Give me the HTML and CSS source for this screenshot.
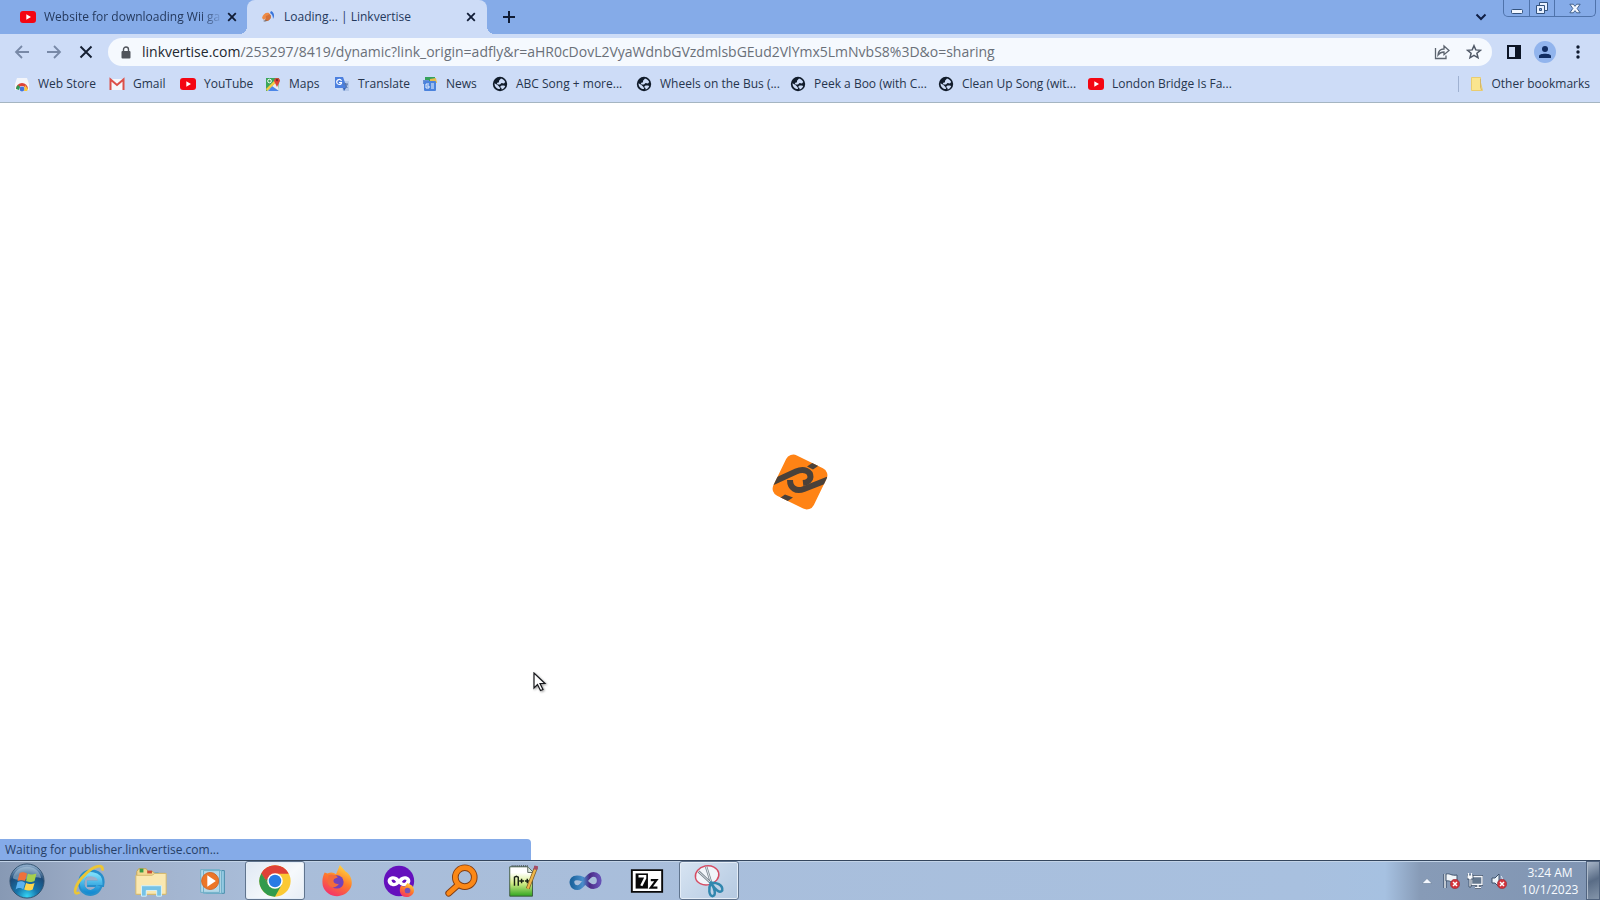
FILE: index.html
```html
<!DOCTYPE html>
<html lang="en">
<head>
<meta charset="utf-8">
<title>Loading... | Linkvertise</title>
<link rel="stylesheet" href="styles.css">
</head>
<body>
<svg class="defs" aria-hidden="true">
  <defs>
    <symbol id="youtube" viewBox="0 0 16 16"><rect y="2" width="16" height="12" rx="3" fill="#f40612"/><path d="M6.3 5.2v5.6L11 8z" fill="#fff"/></symbol>
    <symbol id="globe" viewBox="0 0 16 16"><circle cx="8" cy="8" r="7.2" fill="#111c2b"/><path d="M2.500 7.200c1 1 2.500 1 3.500 2.300S8 11 8 13c-3 0-5.500-2-5.500-5.800zM9 2.500c1.700.3 3.500 1.600 4.200 3.500L12 7.500 9.500 7 8 8.500H5.500L4.800 7 7 6.200V4.800zM9.500 9.500h2.700l1 .7c-.7 1.600-1.800 2.600-3.500 3.200l-.3-1.500L8 11z" fill="#cddcf7"/></symbol>
    <symbol id="cross" viewBox="0 0 10 10"><path d="M1.200 1.200l7.600 7.600M8.800 1.200L1.200 8.800" stroke="#101c35" stroke-width="1.800"/></symbol>
    <symbol id="badge" viewBox="0 0 10 10"><circle cx="5" cy="5" r="4.700" fill="#d3323b" stroke="#8e343e" stroke-width=".6"/><path d="M3 3l4 4M7 3L3 7" stroke="#fff" stroke-width="1.500"/></symbol>
    <linearGradient id="fire" x1=".8" y1="0" x2=".3" y2="1"><stop stop-color="#ffe043"/><stop offset=".5" stop-color="#ff7b29"/><stop offset="1" stop-color="#f3306d"/></linearGradient>
    <radialGradient id="orb" cx=".5" cy=".95" r=".9"><stop stop-color="#35d5f5"/><stop offset=".35" stop-color="#1676ac"/><stop offset=".75" stop-color="#1c4a78"/><stop offset="1" stop-color="#8aa9c8"/></radialGradient>
    <linearGradient id="ie" x2="0" y2="1"><stop stop-color="#7bddfa"/><stop offset="1" stop-color="#168cd2"/></linearGradient>
    <linearGradient id="loop"><stop stop-color="#1d659f"/><stop offset=".4" stop-color="#4a8fcc"/><stop offset=".65" stop-color="#4b2a86"/><stop offset="1" stop-color="#6650b5"/></linearGradient>
    <linearGradient id="note" x2="0" y2="1"><stop offset=".2" stop-color="#fff"/><stop offset=".55" stop-color="#d6ee8a"/><stop offset="1" stop-color="#30a51f"/></linearGradient>
  </defs>
</svg>

<header class="browser">
  <div class="tabstrip">
    <div class="tab">
      <svg class="icon16"><use href="#youtube"/></svg>
      <span class="tab-title fade">Website for downloading Wii ga</span>
      <button class="tab-close" aria-label="Close tab"><svg width="10" height="10"><use href="#cross"/></svg></button>
    </div>
    <div class="tab active">
      <svg class="icon16" viewBox="0 0 16 16"><path d="M2 9c1-4 4-6 7-5l1 2-3 1-3 4z" fill="#ee8b45"/><path d="M3 12c2 1 5 0 7-2l1-4-3 2-2 3z" fill="#685d5c"/><path d="M6 7l4-2 1 4-3 3-3-1z" fill="#d67238"/><path d="M11 2c3 1 4 5 2 8 0-3-1-5-3-6z" fill="#3975dc"/></svg>
      <span class="tab-title">Loading... | Linkvertise</span>
      <button class="tab-close" aria-label="Close tab"><svg width="10" height="10"><use href="#cross"/></svg></button>
    </div>
    <button class="new-tab" aria-label="New tab"><svg width="14" height="14" viewBox="0 0 14 14"><path d="M7 1v12M1 7h12" stroke="#101c35" stroke-width="2"/></svg></button>
    <button class="tab-search" aria-label="Search tabs"><svg width="12" height="8" viewBox="0 0 12 8"><path d="M1.500 1.500L6 6l4.500-4.500" fill="none" stroke="#101f45" stroke-width="2"/></svg></button>
    <div class="window-buttons">
      <button aria-label="Minimize"><svg width="14" height="14" viewBox="0 0 14 14"><rect x="1.500" y="8.500" width="11" height="4" rx="1" fill="#f2f7ff" stroke="#34537e"/></svg></button>
      <button aria-label="Restore"><svg width="14" height="14" viewBox="0 0 14 14"><g fill="#e8f1ff" stroke="#34537e"><path d="M4.500 1.500h8v8h-8z"/><path d="M1.500 4.500h8v8h-8z"/><path d="M4.500 7.500h2v2h-2z" fill="#85abe8"/></g></svg></button>
      <button class="wide" aria-label="Close"><svg width="12" height="11" viewBox="0 0 14 12"><path d="M1 1h4l2 2.500L9 1h4L9.500 6l3.500 5H9L7 8.500 5 11H1l3.500-5z" fill="#f2f7ff" stroke="#34537e"/></svg></button>
    </div>
  </div>

  <div class="toolbar">
    <nav class="nav-buttons" aria-label="Navigation">
      <button aria-label="Back"><svg width="16" height="16" viewBox="0 0 16 16"><path d="M15 8H2M8 2L2 8l6 6" fill="none" stroke="#7889a7" stroke-width="1.800"/></svg></button>
      <button aria-label="Forward"><svg width="16" height="16" viewBox="0 0 16 16"><path d="M1 8h13M8 2l6 6-6 6" fill="none" stroke="#7889a7" stroke-width="1.800"/></svg></button>
      <button aria-label="Stop loading"><svg width="14" height="14" viewBox="0 0 14 14"><path d="M1.500 1.500l11 11M12.500 1.500l-11 11" stroke="#141e31" stroke-width="1.900"/></svg></button>
    </nav>
    <div class="omnibox">
      <svg width="10" height="13" viewBox="0 0 10 13"><path d="M2.500 6V3.500a2.500 2.500 0 015 0V6" fill="none" stroke="#50545b" stroke-width="1.400"/><rect x=".5" y="5" width="9" height="7.500" rx="1" fill="#50545b"/></svg>
      <div class="url" role="textbox" aria-label="Address and search bar" contenteditable="true" spellcheck="false"><span class="host">linkvertise.com</span>/253297/8419/dynamic?link_origin=adfly&amp;r=aHR0cDovL2VyaWdnbGVzdmlsbGEud2VlYmx5LmNvbS8%3D&amp;o=sharing</div>
      <button aria-label="Share"><svg width="16" height="16" viewBox="0 0 16 16"><path d="M1.500 4v10.500h10.500v-3" fill="none" stroke="#5c646f" stroke-width="1.300"/><path d="M4 11c.3-4 2.500-6 6-6V2l5 4.500-5 4.200V8C7.500 8 5.500 9 4 11z" fill="none" stroke="#5c646f" stroke-width="1.300"/></svg></button>
      <button aria-label="Bookmark this tab"><svg width="16" height="16" viewBox="0 0 16 16"><path d="M8 1.700l1.800 4.200 4.600.4-3.500 3 1.100 4.500L8 11.400l-4 2.400 1.100-4.500-3.500-3 4.600-.4z" fill="none" stroke="#505967" stroke-width="1.500"/></svg></button>
    </div>
    <button class="tool" aria-label="Side panel"><svg width="14" height="14" viewBox="0 0 14 14"><path d="M1 1h12v12H1z" fill="none" stroke="#0b1425" stroke-width="2"/><path d="M8 1h5v12H8z" fill="#0b1425"/></svg></button>
    <button class="tool avatar" aria-label="Profile"><svg width="14" height="14" viewBox="0 0 14 14"><circle cx="7" cy="4" r="3" fill="#112d62"/><path d="M1 13v-2c0-3 12-3 12 0v2z" fill="#112d62"/></svg></button>
    <button class="tool" aria-label="Menu"><svg width="4" height="14" viewBox="0 0 4 14"><g fill="#101b30"><circle cx="2" cy="2" r="1.700"/><circle cx="2" cy="7" r="1.700"/><circle cx="2" cy="12" r="1.700"/></g></svg></button>
  </div>

  <nav class="bookmarks" aria-label="Bookmarks">
    <a href="#"><svg class="icon16" viewBox="0 0 16 16"><path d="M3 2h10l2 6v6H1V8z" fill="#f3f5fa"/><path d="M2 13a6 6 0 0112 0H11a3 3 0 00-6 0z" fill="#dd4238"/><path d="M2 13a6 6 0 012-4l2 2-1 3z" fill="#2c9d56"/><path d="M11 9l3 4-1 2h-3z" fill="#f7c63b"/><circle cx="8" cy="13" r="2.400" fill="#4175dd"/></svg>Web Store</a>
    <a href="#"><svg class="icon16" viewBox="0 0 16 16"><path d="M1 3h14v11H1z" fill="#f5f7fb"/><path d="M1.500 14V3.500L8 9l6.500-5.500V14" fill="none" stroke="#dc5049" stroke-width="2"/></svg>Gmail</a>
    <a href="#"><svg class="icon16"><use href="#youtube"/></svg>YouTube</a>
    <a href="#"><svg class="icon16" viewBox="0 0 16 16"><path d="M1 2h13v13H1z" fill="#3ca65b"/><path d="M2 15L13 4l1 11z" fill="#e9edf2"/><path d="M7 10l7 5H3z" fill="#4b86e8"/><path d="M1 13L12 2l2 2L2 15z" fill="#f6cd43"/><path d="M12 11L9 5a3 3 0 116 0z" fill="#dd4438"/><circle cx="12" cy="4" r="1.200" fill="#842c28"/><circle cx="4.500" cy="5" r="1.800" fill="none" stroke="#fff"/></svg>Maps</a>
    <a href="#"><svg class="icon16" viewBox="0 0 16 16"><path d="M6 5h9v10H9z" fill="#b4c8e9"/><path d="M1 1h8l4 11H1z" fill="#4c80df"/><path d="M7.500 5A2.500 2.500 0 105 8.500c1.700 0 2.500-1 2.500-2H5" fill="none" stroke="#fff" stroke-width="1.200"/><path d="M9 12h3l-2 3z" fill="#3564b7"/><path d="M9 8h5M11.500 7c0 3 1 4 2 5M13 8c0 2-1 3-2 4" stroke="#5675ab" fill="none"/></svg>Translate</a>
    <a href="#"><svg class="icon16" viewBox="0 0 16 16"><path d="M3 1h10v6H3z" fill="#36a15b"/><path d="M8 3l6-1 1 5H8z" fill="#e7bb4e"/><path d="M1 4h6v4H1z" fill="#658fd3"/><rect x="2" y="5" width="12" height="10" rx="1" fill="#4b83dd"/><path d="M7 8H4v4h3v-2H5M9 8h3M9 10h3M9 12h3" stroke="#edf5ff" fill="none"/></svg>News</a>
    <a href="#"><svg class="icon16"><use href="#globe"/></svg>ABC Song + more...</a>
    <a href="#"><svg class="icon16"><use href="#globe"/></svg>Wheels on the Bus (...</a>
    <a href="#"><svg class="icon16"><use href="#globe"/></svg>Peek a Boo (with C...</a>
    <a href="#"><svg class="icon16"><use href="#globe"/></svg>Clean Up Song (wit...</a>
    <a href="#"><svg class="icon16"><use href="#youtube"/></svg>London Bridge Is Fa...</a>
    <a href="#" class="other"><svg class="icon16" viewBox="0 0 16 16"><path d="M2.500 1.500h9v5l2 8h-11z" fill="#fae58f" stroke="#e9cc70"/><path d="M11.500 3v8l1 3" stroke="#d4b767" fill="none"/></svg>Other bookmarks</a>
  </nav>
</header>

<main class="page">
  <svg class="logo" viewBox="0 0 56 56" role="img" aria-label="Linkvertise">
    <defs><clipPath id="tile"><rect x="5.500" y="5.500" width="45" height="45" rx="8" transform="rotate(26 28 28)"/></clipPath></defs>
    <g clip-path="url(#tile)">
      <path d="M0 0h56v56H0z" fill="#ff8315"/>
      <g fill="none" stroke="#4a413a" stroke-width="6">
        <path d="M0 28.500 24 17.500C32 14 38.500 17 38.500 23c0 3-3 5.500-7.500 6"/>
        <path d="M18 26c0 8 6 12 14 9l24-9.500"/>
      </g>
      <path d="M35 12.500l9-6 5 3.500-8 5.500zM21 43.500l-9 6-7-3.500 8-5.500z" fill="#4a413a"/>
    </g>
  </svg>
  <svg class="cursor" viewBox="0 0 14 22" aria-hidden="true"><path d="M1 1v15l3.500-3.500 3 6 2.500-1-3-6h5z" fill="#fff" stroke="#17181c" stroke-width="1.200"/></svg>
  <div class="status" role="status">Waiting for publisher.linkvertise.com...</div>
</main>

<footer class="taskbar">
  <div class="apps">
    <button aria-label="Start"><svg viewBox="0 0 38 38"><circle cx="19" cy="19" r="18" fill="url(#orb)" stroke="#31516f"/><path d="M4 16C7 0 31 0 34 16c-9-4-20 5-30 0z" fill="#c6dceb" opacity=".45"/><path d="M11 11c3-2 5-1 8 0l-2 8c-3-1-5-1-8 0z" fill="#ef713b"/><path d="M20 11c3 2 5 1 9 0l-2 8c-4 2-6 1-9 0z" fill="#a5cf4d"/><path d="M9 20c3-1 5-1 8 1l-2 7c-3-2-5-2-8 0z" fill="#5cb2ef"/><path d="M18 21c3 1 5 2 9 0l-2 7c-3 2-6 1-9 0z" fill="#ffd64c"/></svg></button>
    <button aria-label="Internet Explorer"><svg viewBox="0 0 38 38"><path d="M30 24c-2 6-7 9-13 7-5-2-7-7-6-12 1-6 6-10 12-9 7 1 10 6 9 12H17" fill="none" stroke="#278fcb" stroke-width="6.500"/><path d="M29 24c-2 5-7 8-12 6-4-2-6-6-5-11 1-5 5-8 11-7 6 1 8 5 8 9H17" fill="none" stroke="url(#ie)" stroke-width="4.500"/><path d="M9 31C0 36 5 21 15 12 24 3 35 0 33 8" fill="none" stroke="#ebc636" stroke-width="3"/></svg></button>
    <button aria-label="Windows Explorer"><svg viewBox="0 0 38 38"><path d="M4 9l2-3h8l2 3h5l2 2h11v22H4z" fill="#f3d991" stroke="#c4a459"/><path d="M7 6h4v4H7z" fill="#3b9b44"/><path d="M15 8h5v3h-5z" fill="#c94c36"/><path d="M23 10h4v3h-4z" fill="#4aa3bf"/><path d="M3 13h17l3-2h12v22H3z" fill="#fae8b1" stroke="#d4b86d"/><path d="M9 35V24h21v11h-5v-6H14v6z" fill="#75c2e6" stroke="#d9f2fb"/></svg></button>
    <button aria-label="Media Player"><svg viewBox="0 0 38 38"><path d="M12 8h19v24H12z" fill="#95cbe3" stroke="#458ca9"/><path d="M9 8h19v24H9zM6 7h20v24H6z" fill="#b5d9e9" stroke="#6daec7"/><circle cx="16" cy="19" r="9" fill="#ec7627" stroke="#cf6729"/><path d="M13 13v12l9-6z" fill="#fff"/></svg></button>
    <button class="open bright" aria-label="Chrome"><svg viewBox="0 0 38 38"><circle cx="19" cy="19" r="16.500" fill="#fbc934"/><path d="M12 23L4.700 10.700A16.500 16.500 0 0019 35.500l7-12.500z" fill="#329b4d"/><path d="M12 23L4.700 10.700A16.500 16.500 0 0133.300 11H19z" fill="#df4137"/><path d="M4.700 10.700L12 23l4-12z" fill="#329b4d"/><path d="M4.700 10.700L9.500 18 19 11h14.300a16.500 16.500 0 00-28.600-.3z" fill="#df4137"/><circle cx="19" cy="19" r="8.200" fill="#fff"/><circle cx="19" cy="19" r="6.600" fill="#277be4"/></svg></button>
    <button aria-label="Firefox"><svg viewBox="0 0 38 38"><path d="M6 10l3 1c4-2 7-1 9 1l4-10 6 7c7 4 8 13 5 18-7 12-25 10-29-3-1-6 0-10 2-14z" fill="url(#fire)"/><circle cx="19" cy="20" r="7" fill="#7342bb"/><path d="M10 13c4-2 8 0 10 2l-4 2c-2 3 1 6 5 5-3 6-11 4-12-2z" fill="#f36c3b"/></svg></button>
    <button aria-label="Private browser"><svg viewBox="0 0 38 38"><circle cx="19" cy="19" r="16" fill="#6510bd"/><path d="M19 17c-4-5-12-3-12 2s8 8 12 3c4 5 12 2 12-3s-8-7-12-2z" fill="#fff"/><path d="M11 18q3-2 5 2-4 3-5-2zM22 20q2-4 5-2-1 5-5 2z" fill="#6510bd"/><path d="M21 24l4 1 3-4 5 3c5 7-1 12-6 12-6 0-9-6-6-12z" fill="url(#fire)"/><circle cx="28" cy="29" r="3" fill="#7850b8"/></svg></button>
    <button aria-label="Search"><svg viewBox="0 0 38 38"><g fill="none" stroke-linecap="round"><path d="M16 23L6 32" stroke="#813d13" stroke-width="7"/><circle cx="23" cy="15" r="10" stroke="#813d13" stroke-width="7"/><path d="M16 23L6 32" stroke="#fb8817" stroke-width="5"/><circle cx="23" cy="15" r="10" stroke="#fb8817" stroke-width="5"/></g></svg></button>
    <button aria-label="Notepad++"><svg viewBox="0 0 38 38"><path d="M5 4h19l5 5v26H5z" fill="url(#note)" stroke="#3d5841"/><path d="M24 4v6h5" fill="#dde7dc" stroke="#59645b"/><path d="M7 3h17" stroke="#252525" stroke-dasharray="1 1"/><path d="M10 24v-9l2-1 2 1v9M15 19h5M17.500 16.500v5M21 19h5M23.500 16.500v5" fill="none" stroke="#172014" stroke-width="1.500"/><path d="M33 4L24 27" stroke="#7b5724" stroke-width="4"/><path d="M33 4L24 27" stroke="#edb648" stroke-width="2.500"/><path d="M33 3l-1 4" stroke="#a64b68" stroke-width="4"/></svg></button>
    <button aria-label="Visual Studio"><svg viewBox="0 0 38 38"><path d="M19 19c-3-3-8-4-11-3-5 2-3 10 3 10 7 0 9-14 17-14 8 0 8 13 0 13-4 0-6-2-9-6z" fill="none" stroke="url(#loop)" stroke-width="5"/></svg></button>
    <button aria-label="7-Zip"><svg viewBox="0 0 38 38"><path d="M3 7.500h32v23H3z" fill="#fff" stroke="#090909" stroke-width="2"/><path d="M7 11h13v16H7z" fill="#080808"/><path d="M10 14h7v2l-4 8" fill="none" stroke="#fff" stroke-width="2.500"/><path d="M23 18h6l-6 8h7" fill="none" stroke="#080808" stroke-width="2.300"/></svg></button>
    <button class="open" aria-label="Snipping Tool"><svg viewBox="0 0 38 38"><ellipse cx="17" cy="13" rx="12.500" ry="10" fill="#f1f5fa" stroke="#d54c63" stroke-width="1.500" transform="rotate(-12 17 13)"/><path d="M8 9l14 13M16 4l6 19" stroke="#78848e" stroke-width="2.600"/><path d="M8 9l14 13M16 4l6 19" stroke="#e7edf1"/><path d="M21 21c-3 6-2 14 2 14 4-1 2-8-2-14zM21 21c5-1 13 2 12 8-3 4-8-2-12-8z" fill="none" stroke="#3187ae" stroke-width="2.600"/></svg></button>
  </div>
  <div class="tray">
    <button aria-label="Show hidden icons"><svg width="10" height="6" viewBox="0 0 10 6"><path d="M0 5.500l5-5 5 5z" fill="#f4f8ff" stroke="#59708d" stroke-width=".5"/></svg></button>
    <button aria-label="Action Center"><svg width="17" height="16" viewBox="0 0 17 16"><path d="M2 1v14" stroke="#263952" stroke-width="3"/><path d="M2 1v14" stroke="#f5f7fb" stroke-width="1.500"/><path d="M3 1c4-1 5 2 11 1v7C8 10 7 7 3 8z" fill="#f1f5f9" stroke="#40546e"/><use href="#badge" x="7" y="6" width="10" height="10"/></svg></button>
    <button aria-label="Network"><svg width="16" height="16" viewBox="0 0 16 16"><path d="M6 3.500h9v8H3.500V6M8 14.500h6M11 12v2" fill="none" stroke="#33465f" stroke-width="3"/><path d="M4.500 3.500h10.500v8H4.500z" fill="#64788f" stroke="#f5f7fb" stroke-width="1.400"/><path d="M8 14.500h6M11 12v2" stroke="#f5f7fb" stroke-width="1.400"/><path d="M0 2h6v4H4v8H2V6H0z" fill="#f5f7fb" stroke="#33465f" stroke-width=".8"/><path d="M1.500 0v3M4.500 0v3" stroke="#f5f7fb" stroke-width="1.200"/></svg></button>
    <button aria-label="Volume, muted"><svg width="16" height="16" viewBox="0 0 16 16"><path d="M1 5h3l4-4v13l-4-4H1z" fill="#edf4f9" stroke="#3c516a"/><path d="M10 3c2 2 2 7 0 9" stroke="#e9f2fa" fill="none"/><use href="#badge" x="6" y="6" width="10" height="10"/></svg></button>
    <time class="clock" datetime="2023-10-01T03:24"><span>3:24 AM</span><span>10/1/2023</span></time>
    <button class="show-desktop" aria-label="Show desktop"></button>
  </div>
</footer>
</body>
</html>
```

FILE: styles.css
```css
* { box-sizing: border-box; }

body {
  margin: 0;
  min-height: 100vh;
  display: flex;
  flex-direction: column;
  overflow: hidden;
  background: #fff;
  color: #263650;
  font: 12px/16px "Open Sans", "Noto Sans", sans-serif;
}

button {
  display: flex;
  align-items: center;
  justify-content: center;
  flex-shrink: 0;
  margin: 0;
  padding: 0;
  border: 0;
  background: none;
  font: inherit;
}

svg { display: block; flex-shrink: 0; }
.defs { position: absolute; width: 0; height: 0; }
.icon16 { width: 16px; height: 16px; }

.browser { background: #cddcf7; border-bottom: 1px solid #a5b5c1; }

.tabstrip { display: flex; height: 34px; background: #85abe8; }

.tab {
  display: flex;
  align-items: center;
  gap: 8px;
  width: 247px;
  padding: 0 8px 0 20px;
}

.tab.active {
  position: relative;
  width: 240px;
  padding: 0 9px 0 13px;
  border-radius: 8px 8px 0 0;
  background: #cddcf7;
}

.tab.active::before,
.tab.active::after {
  content: "";
  position: absolute;
  bottom: 0;
  width: 8px;
  height: 8px;
}
.tab.active::before { right: 100%; background: radial-gradient(circle at 0 0, transparent 8px, #cddcf7 8px); }
.tab.active::after { left: 100%; background: radial-gradient(circle at 100% 0, transparent 8px, #cddcf7 8px); }

.tab-title { flex: 1; min-width: 0; overflow: hidden; white-space: nowrap; color: #24395d; }
.tab-title.fade { margin-right: -6px; -webkit-mask-image: linear-gradient(to right, #000 88%, transparent); mask-image: linear-gradient(to right, #000 88%, transparent); }
.tab-close { width: 14px; height: 16px; }
.new-tab { width: 44px; }
.tab-search { width: 24px; margin-left: auto; }

.window-buttons {
  display: flex;
  align-self: flex-start;
  height: 17px;
  margin: 0 4px 0 10px;
  border: 1px solid #4f73ab;
  border-top: 0;
  border-radius: 0 0 5px 5px;
}
.window-buttons button { width: 25px; }
.window-buttons button + button { border-left: 1px solid #4f73ab; }
.window-buttons .wide { width: 41px; }

.toolbar { display: flex; align-items: center; height: 36px; padding: 0 10px 0 6px; }
.nav-buttons { display: flex; width: 102px; }
.nav-buttons button { width: 32px; height: 28px; }

.omnibox {
  display: flex;
  flex: 1;
  align-items: center;
  min-width: 0;
  height: 28px;
  padding: 0 10px 0 13px;
  border-radius: 14px;
  background: #f5f9fe;
}
.omnibox button { width: 32px; height: 28px; }
.omnibox button:last-child { margin-right: -8px; }
.url { flex: 1; min-width: 0; margin-left: 11px; overflow: hidden; white-space: nowrap; font-size: 14px; line-height: 20px; color: #6a7079; }
.host { color: #22272f; }

.tool { width: 24px; height: 24px; margin-left: 8px; }
.tool:first-of-type { margin-left: 10px; }
.tool:last-child { margin-left: 10px; }
.avatar { width: 22px; height: 22px; border-radius: 50%; background: #91b4ed; }

.bookmarks {
  display: grid;
  grid-template-columns: 95px 71px 85px 69px 88px 70px 144px 154px 148px 150px 160px 1fr;
  align-items: center;
  height: 32px;
  padding: 0 10px 4px 14px;
  overflow: hidden;
}
.bookmarks a { display: flex; align-items: center; gap: 8px; white-space: nowrap; color: #26354d; text-decoration: none; }
.bookmarks .other { justify-self: end; gap: 6px; padding-left: 10px; border-left: 1px solid #9fb1d1; }

.page {
  position: relative;
  flex: 1;
  display: flex;
  align-items: center;
  justify-content: center;
}
.logo { width: 56px; height: 56px; }
.cursor { position: absolute; left: 533px; top: 569px; width: 14px; height: 22px; filter: drop-shadow(1px 1px 1px #0006); }
.status {
  position: absolute;
  left: 0;
  bottom: 0;
  width: 531px;
  padding: 3px 5px 2px;
  border-radius: 0 4px 0 0;
  background: #85abe8;
  color: #263f67;
}

.taskbar {
  display: flex;
  justify-content: space-between;
  height: 40px;
  border-top: 1px solid #34465e;
  box-shadow: inset 0 1px #c2d3e7;
  background: linear-gradient(to right, #8799b4, #9fafc9 100px, #a9bdd9 260px, #a8c0df 1300px, #a6c1e1 calc(100% - 215px), #879bb7 calc(100% - 180px), #8095b3);
}
.apps { display: flex; }
.apps button { width: 60px; margin-right: 2px; }
.apps button:first-child { width: 54px; margin-right: 5px; }
.apps svg { width: 36px; height: 36px; }
.apps .open { border: 1px solid #60748e; border-radius: 3px; background: linear-gradient(135deg, #d7e4f2, #b4c9e1); box-shadow: inset 0 0 0 1px #e4edf7; }
.apps .bright { background: linear-gradient(135deg, #dfe8f3, #f6f9fc 60%, #e7edf5); }

.tray { display: flex; align-items: center; }
.tray button { width: 24px; height: 24px; }
.clock { display: flex; flex-direction: column; width: 72px; margin-left: 3px; text-align: center; line-height: 17px; color: #f8fbff; }
.tray .show-desktop { width: 14px; height: 100%; border: 1px solid #51647f; background: linear-gradient(155deg, #a8b6c8, #596c86 50%, #8495aa); box-shadow: inset 1px 0 #aebbcb; }
```
